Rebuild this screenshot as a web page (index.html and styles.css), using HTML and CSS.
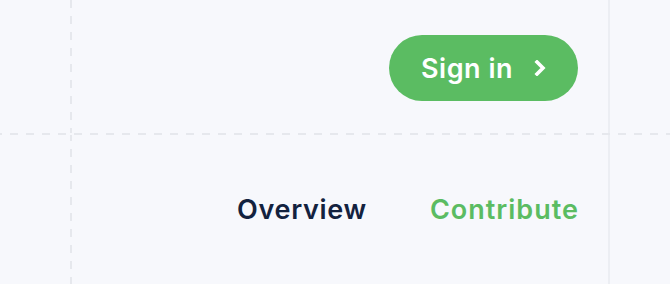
FILE: index.html
```html
<!DOCTYPE html>
<html lang="en">
<head>
<meta charset="UTF-8">
<meta name="viewport" content="width=device-width, initial-scale=1.0">
<title>Header</title>
<link rel="stylesheet" href="styles.css">
</head>
<body>
<div class="shell">
  <header class="topbar">
    <a class="btn-signin" href="#">
      <span>Sign in</span>
      <svg class="chevron" width="12" height="16" viewBox="0 0 12 16" aria-hidden="true">
        <path d="M3 2 L9 8 L3 14" fill="none" stroke="#fff" stroke-width="3.6" stroke-linecap="square" stroke-linejoin="miter"/>
      </svg>
    </a>
  </header>
  <nav class="nav">
    <a class="nav-link" href="#">Overview</a>
    <a class="nav-link active" href="#">Contribute</a>
  </nav>
</div>
</body>
</html>
```

FILE: styles.css
```css
body {
  margin: 0;
  padding: 0;
  background-color: #f7f8fc;
  font-family: Inter, "Noto Sans", sans-serif;
}

.shell {
  height: 284px;
  background-image:
    repeating-linear-gradient(90deg, #e6e8ed 0 2px, transparent 2px 10px, #e6e8ed 10px 16px),
    linear-gradient(#eceef3, #eceef3),
    repeating-linear-gradient(180deg, #e6e8ed 0 8px, transparent 8px 16px),
    repeating-linear-gradient(180deg, #e6e8ed 0 6px, transparent 6px 14px, #e6e8ed 14px 16px);
  background-size: 100% 2px, 2px 100%, 2px 133px, 2px 149px;
  background-position: 0 133px, 608px 0, 70px 0, 70px 135px;
  background-repeat: no-repeat;
}

.topbar {
  height: 133px;
  display: flex;
  justify-content: flex-end;
  align-items: center;
  padding-right: 92px;
  box-sizing: border-box;
  padding-top: 3px;
}

.btn-signin {
  display: flex;
  align-items: center;
  gap: 21px;
  height: 66px;
  padding: 0 32px 0 32px;
  box-sizing: border-box;
  border-radius: 33px;
  background-color: #5bbc62;
  color: #fff;
  text-decoration: none;
  font-size: 27px;
  font-weight: 600;
  letter-spacing: 0.5px;
}

.chevron {
  display: block;
}

.nav {
  height: 151px;
  display: flex;
  justify-content: flex-end;
  align-items: center;
  gap: 63px;
  padding-right: 91px;
  padding-top: 1px;
  box-sizing: border-box;
}

.nav-link {
  font-size: 27px;
  font-weight: 600;
  color: #13223f;
  text-decoration: none;
  letter-spacing: 0.7px;
}

.nav-link.active {
  color: #5bbc62;
  letter-spacing: 1px;
}
```
